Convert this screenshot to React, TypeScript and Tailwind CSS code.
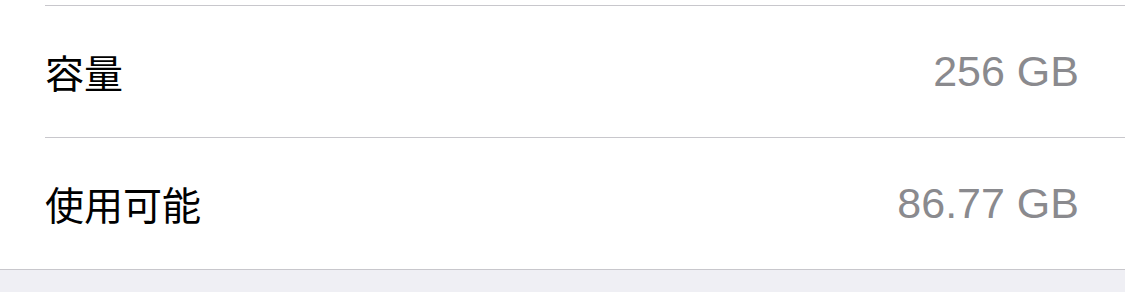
import React from "react";

const rows = [
  { label: "容量", value: "256 GB" },
  { label: "使用可能", value: "86.77 GB" },
];

export default function App() {
  return (
    <div className="w-[1125px] h-[292px] bg-[#efeff4] overflow-hidden">
      <div className="bg-white pt-[5px] border-b border-[#c8c7cc]">
        {rows.map((r, i) => (
          <div
            key={i}
            className="ml-[45px] h-[132px] border-t border-[#c8c7cc] flex items-center justify-between pr-[46px]"
          >
            <span className="text-[39px] leading-none text-black font-['Noto_Sans_CJK_JP','Noto_Sans_CJK_SC',sans-serif]">
              {r.label}
            </span>
            <span className="text-[43px] leading-none text-[#8a8a8e] font-['Liberation_Sans',Arial,sans-serif]">
              {r.value}
            </span>
          </div>
        ))}
      </div>
    </div>
  );
}
